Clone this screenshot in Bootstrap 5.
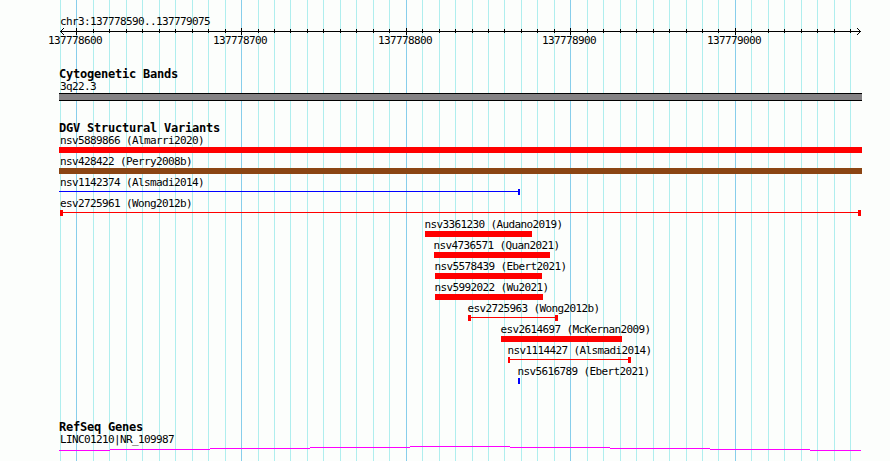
<!DOCTYPE html>
<html lang="en">

<head>
    <meta charset="UTF-8">
    <meta name="viewport" content="width=device-width, initial-scale=1.0">
    <title>chr3:137778590..137779075</title>
    <link rel="stylesheet" href="https://cdn.jsdelivr.net/npm/bootstrap@5.3.3/dist/css/bootstrap.min.css">
    <style>
        body {
            background-color: #fcfefc;
            color: #000;
            font-family: "DejaVu Sans Mono", "Liberation Mono", monospace;
            font-size: 11px;
            letter-spacing: -0.62px;
            line-height: 12px;
        }

        .browser {
            width: 890px;
            height: 461px;
        }

        .tracks {
            margin-left: 59px;
            width: 803px;
        }

        .region {
            height: 28px;
            padding: 16px 0 0 1px;
        }

        .ruler {
            height: 40px;
            margin-left: -59px;
        }

        .track-title {
            font-size: 12px;
            font-weight: bold;
            letter-spacing: -0.22px;
            line-height: 13px;
            height: 13px;
            margin: 0;
        }

        .feature-label {
            height: 12px;
            padding-left: 1px;
        }

        .feature {
            height: 21px;
        }

        .feature .feature-label {
            padding-left: 0;
        }

        .glyph {
            height: 6px;
        }

        .glyph-line {
            height: 1px;
            margin-top: 2px;
        }

        .band {
            height: 8px;
            background-color: #848284;
            border: solid #000;
            border-width: 1px 0;
        }

        .cytobands {
            height: 54px;
        }

        .variants {
            height: 299px;
        }

        svg {
            shape-rendering: crispEdges;
        }
    </style>
</head>

<body>
    <div class="browser position-relative overflow-hidden">
        <svg class="position-absolute top-0 start-0" id="grid" width="890" height="461"></svg>
        <main class="tracks position-relative">
            <div class="region text-nowrap">chr3:137778590..137779075</div>
            <svg class="ruler d-block" id="ruler" width="890" height="40"></svg>

            <section class="cytobands">
                <h2 class="track-title">Cytogenetic Bands</h2>
                <div class="feature-label">3q22.3</div>
                <div class="band"></div>
            </section>

            <section class="variants">
                <h2 class="track-title">DGV Structural Variants</h2>
                <div id="variants"></div>
            </section>

            <section>
                <h2 class="track-title">RefSeq Genes</h2>
                <div class="feature-label">LINC01210|NR_109987</div>
                <svg class="d-block" width="803" height="14">
                    <path fill="none" stroke="#ff00ff"
                        d="M0 4.5H51M51 3.5H151M151 2.5H251M251 1.5H351M351 .5H451M451 1.5H551M551 2.5H651M651 3.5H751M751 4.5H802" />
                </svg>
            </section>
        </main>
    </div>

    <script src="https://cdn.jsdelivr.net/npm/bootstrap@5.3.3/dist/js/bootstrap.bundle.min.js"></script>
    <script>
        const left = 59;
        const gridLines = [60, 76, 93, 109, 126, 142, 159, 175, 192, 208, 225, 241, 258, 274, 290, 307,
            323, 340, 356, 373, 389, 406, 422, 439, 455, 472, 488, 504, 521, 537, 554, 570, 587, 603,
            620, 636, 653, 669, 686, 702, 718, 735, 751, 768, 784, 801, 817, 834, 850];
        const majors = { 76: "137778600", 241: "137778700", 406: "137778800", 570: "137778900", 735: "137779000" };

        // start / end are pixels, caps are the widths of the end boxes
        const variants = [
            { name: "nsv5889866 (Almarri2020)", start: 59, end: 862, color: "#ff0000" },
            { name: "nsv428422 (Perry2008b)", start: 59, end: 862, color: "#8b4513" },
            { name: "nsv1142374 (Alsmadi2014)", start: 59, end: 520, color: "#0000ff", caps: [0, 2] },
            { name: "esv2725961 (Wong2012b)", start: 60, end: 861, color: "#ff0000", caps: [3, 3] },
            { name: "nsv3361230 (Audano2019)", start: 425, end: 532, color: "#ff0000" },
            { name: "nsv4736571 (Quan2021)", start: 434, end: 550, color: "#ff0000" },
            { name: "nsv5578439 (Ebert2021)", start: 435, end: 542, color: "#ff0000" },
            { name: "nsv5992022 (Wu2021)", start: 435, end: 543, color: "#ff0000" },
            { name: "esv2725963 (Wong2012b)", start: 468, end: 558, color: "#ff0000", caps: [3, 3] },
            { name: "esv2614697 (McKernan2009)", start: 501, end: 622, color: "#ff0000" },
            { name: "nsv1114427 (Alsmadi2014)", start: 508, end: 631, color: "#ff0000", caps: [2, 3] },
            { name: "nsv5616789 (Ebert2021)", start: 518, end: 520, color: "#0000ff" }
        ];

        function box(className, width, color) {
            return `<div class="${className}" style="width: ${width}px; background-color: ${color}"></div>`;
        }

        function drawGrid() {
            document.getElementById("grid").innerHTML = gridLines.map((x) =>
                `<rect x="${x}" y="0" width="1" height="461" fill="${majors[x] ? "#87ceeb" : "#afeeee"}"/>`
            ).join("");
        }

        function drawRuler() {
            let out = '<path d="M60 3h801v1H60z"/>';
            // arrow heads
            for (let i = 1; i <= 3; i++) {
                out += `<path d="M${60 + i} ${3 - i}h1v1h-1zM${60 + i} ${3 + i}h1v1h-1z"/>`;
                out += `<path d="M${860 - i} ${3 - i}h1v1h-1zM${860 - i} ${3 + i}h1v1h-1z"/>`;
            }
            gridLines.slice(1).forEach((x) => {
                out += majors[x]
                    ? `<rect x="${x}" y="0" width="1" height="7"/><text x="${x - 28}" y="16">${majors[x]}</text>`
                    : `<rect x="${x}" y="1" width="1" height="4"/>`;
            });
            document.getElementById("ruler").innerHTML = out;
        }

        function drawVariants() {
            document.getElementById("variants").innerHTML = variants.map((v) => {
                const width = v.end - v.start;
                // labels sit half a pixel before the bar, but never left of the panel
                const labelX = Math.max(v.start - 0.5, 60) - left;
                const glyph = v.caps
                    ? box("glyph", v.caps[0], v.color) +
                    box("glyph-line", width - v.caps[0] - v.caps[1], v.color) +
                    box("glyph", v.caps[1], v.color)
                    : box("glyph", width, v.color);
                return `<div class="feature">
                    <div class="feature-label text-nowrap" style="margin-left: ${labelX}px">${v.name}</div>
                    <div class="d-flex" style="margin-left: ${v.start - left}px">${glyph}</div>
                </div>`;
            }).join("");
        }

        drawGrid();
        drawRuler();
        drawVariants();
    </script>
</body>

</html>
